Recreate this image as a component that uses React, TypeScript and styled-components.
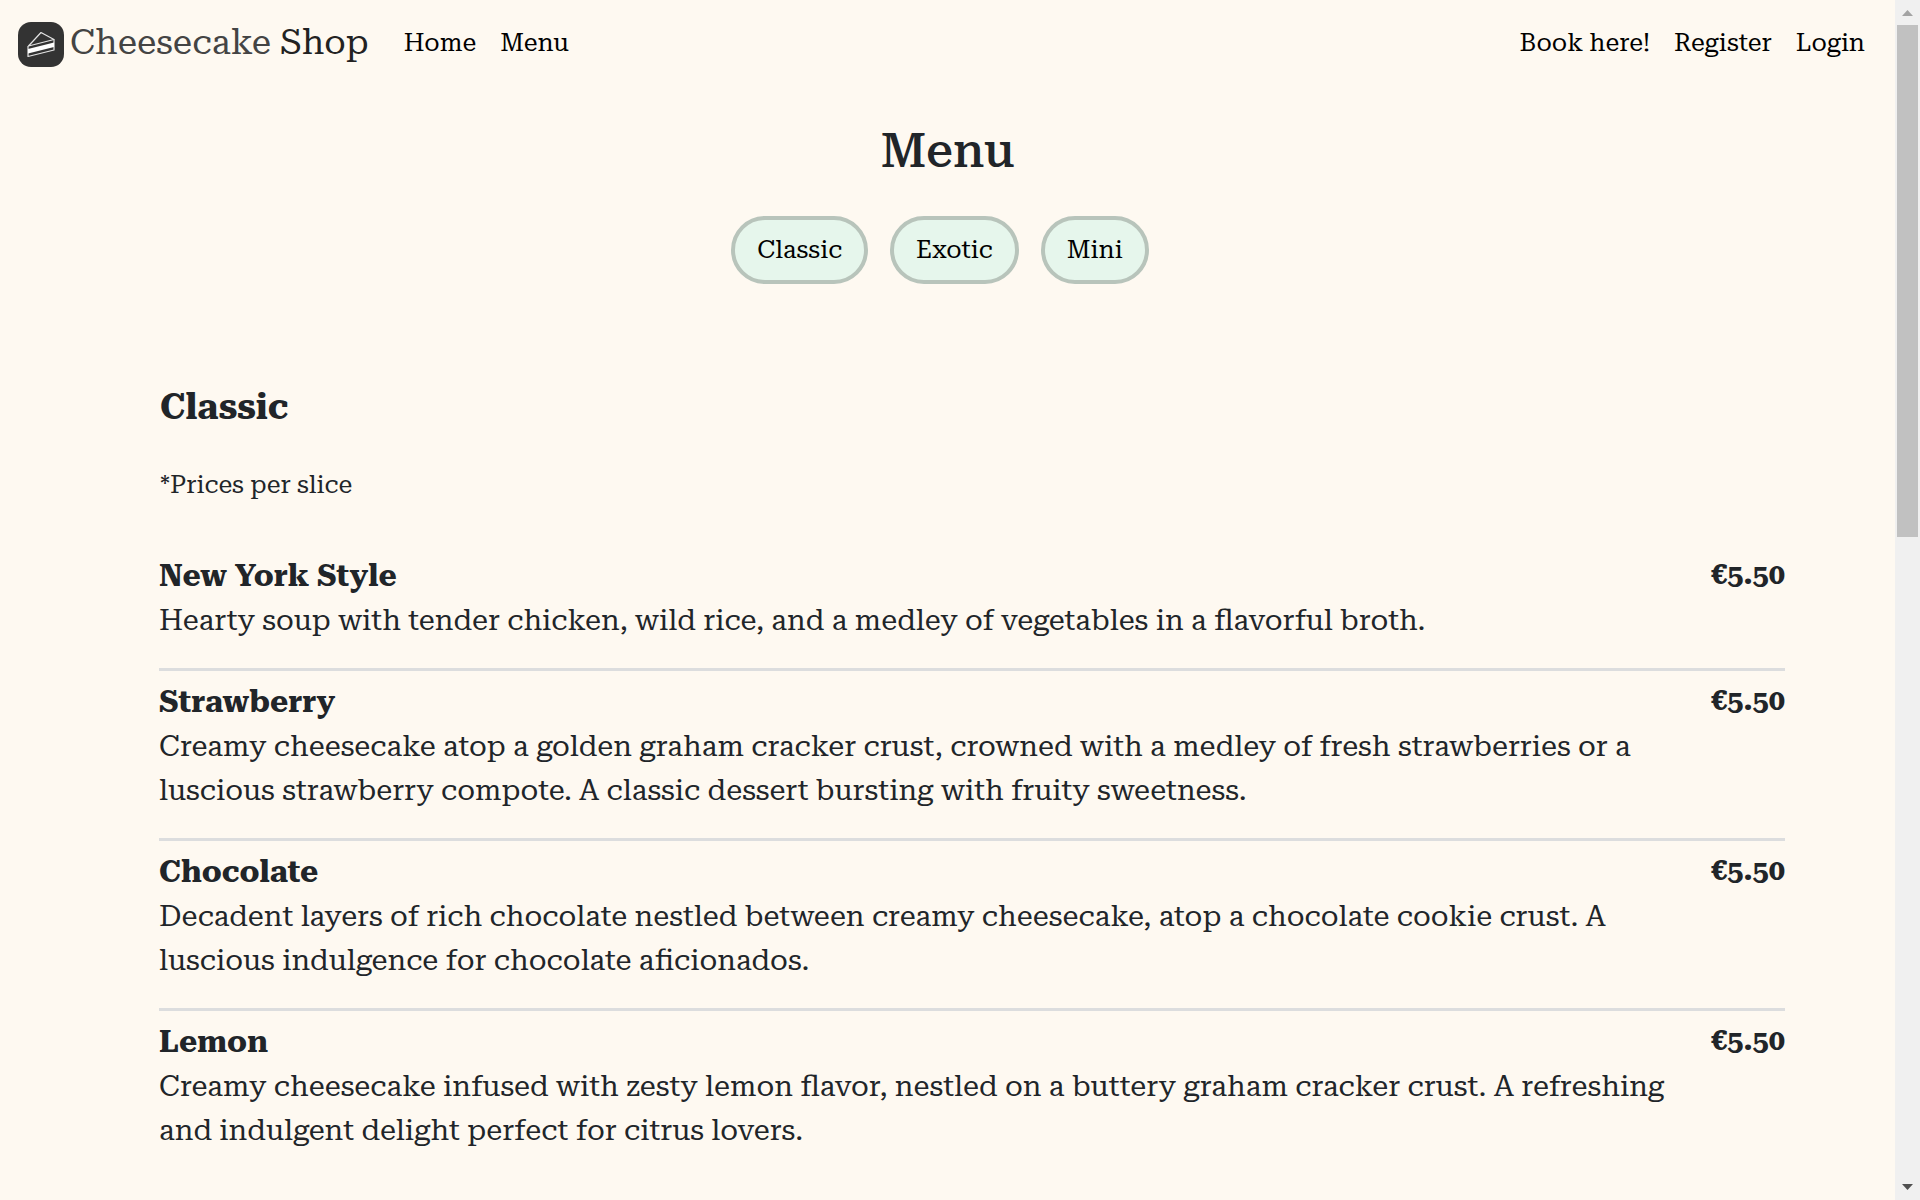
import React from "react";
import styled, { createGlobalStyle } from "styled-components";

const serif = '"Roboto Serif", "DejaVu Serif Condensed", "DejaVu Serif", serif';

const GlobalStyle = createGlobalStyle`
  *, *::before, *::after { box-sizing: border-box; }
  body {
    margin: 0;
    background: #fef9f1;
    color: #212529;
    font-family: ${serif};
    font-size: 25px;
    font-weight: 400;
    line-height: 36px;
  }
  h1, h2, h3, p, ul { margin: 0; padding: 0; }
`;

const Shell = styled.div`
  display: grid;
  grid-template-columns: minmax(0, 1fr) 25px;
  height: 100vh;
  overflow: hidden;
`;

const Page = styled.div`
  min-width: 0;
  overflow: hidden;
`;

const NavBar = styled.header`
  display: flex;
  align-items: center;
  height: 88px;
  padding: 0 30px 0 18px;
`;

const Brand = styled.a`
  display: flex;
  align-items: center;
  gap: 6px;
  margin-right: 35px;
  color: #444;
  font-size: 35px;
  line-height: 44px;
  text-decoration: none;
  white-space: nowrap;
`;

const BrandIcon = styled.svg`
  width: 46px;
  height: 46px;
`;

const BrandName = styled.span`
  padding-bottom: 2px;
`;

const BrandStrong = styled.span`
  color: #222;
`;

const NavLinks = styled.nav<{ $end?: boolean }>`
  display: flex;
  gap: 24px;
  margin-left: ${(p) => (p.$end ? "auto" : "0")};
  padding-bottom: 2px;
`;

const NavLink = styled.a`
  color: #000;
  text-decoration: none;
  white-space: nowrap;
`;

const Title = styled.h1`
  padding-top: 33px;
  font-size: 48px;
  font-weight: 500;
  line-height: 60px;
  text-align: center;
`;

const Categories = styled.div`
  display: flex;
  justify-content: center;
  gap: 22px;
  padding: 35px 15px 0 0;
`;

const CategoryButton = styled.button`
  height: 68px;
  padding: 0 22px;
  border: 4px solid #b8c4bb;
  border-radius: 34px;
  background: #e6f6ec;
  color: #000;
  font: inherit;
  cursor: pointer;
`;

const Section = styled.main`
  margin: 0 110px 0 159px;
  padding-top: 101px;
`;

const SectionTitle = styled.h2`
  padding-left: 1px;
  font-size: 36px;
  font-weight: 700;
  line-height: 44px;
`;

const Note = styled.p`
  padding: 38px 0 42px 1px;
`;

const Items = styled.ul`
  list-style: none;
`;

const Item = styled.li`
  padding: 8px 0 26px;
  border-bottom: 3px solid #dcddde;

  &:last-child {
    border-bottom: 0;
  }
`;

const ItemHead = styled.div`
  display: flex;
  justify-content: space-between;
  align-items: flex-start;
`;

const ItemName = styled.h3`
  font-size: 31px;
  font-weight: 700;
  line-height: 45px;
`;

const Price = styled.span`
  font-size: 29px;
  font-weight: 700;
  line-height: 42px;
`;

const Description = styled.p`
  max-width: 94%;
  font-size: 29px;
  line-height: 44px;
`;

const ScrollBar = styled.div`
  display: flex;
  flex-direction: column;
  align-items: center;
  background: #f0f0f0;
`;

const ScrollThumb = styled.div`
  width: 21px;
  height: 42.7%;
  margin-bottom: auto;
  background: #c1c1c1;
`;

const ScrollArrow = styled.svg`
  width: 25px;
  height: 25px;
`;

const cheesecakes = [
  {
    name: "New York Style",
    price: "€5.50",
    text: "Hearty soup with tender chicken, wild rice, and a medley of vegetables in a flavorful broth.",
  },
  {
    name: "Strawberry",
    price: "€5.50",
    text: "Creamy cheesecake atop a golden graham cracker crust, crowned with a medley of fresh strawberries or a luscious strawberry compote. A classic dessert bursting with fruity sweetness.",
  },
  {
    name: "Chocolate",
    price: "€5.50",
    text: "Decadent layers of rich chocolate nestled between creamy cheesecake, atop a chocolate cookie crust. A luscious indulgence for chocolate aficionados.",
  },
  {
    name: "Lemon",
    price: "€5.50",
    text: "Creamy cheesecake infused with zesty lemon flavor, nestled on a buttery graham cracker crust. A refreshing and indulgent delight perfect for citrus lovers.",
  },
];

export default function App() {
  return (
    <>
      <GlobalStyle />
      <Shell>
        <Page>
          <NavBar>
            <Brand href="#">
              <BrandIcon viewBox="0 0 46 46" aria-hidden="true">
                <rect y="1" width="46" height="45" rx="13" fill="#333" />
                <path d="M10.5 25 L23 11.500 L36 18.500 Z" fill="none" stroke="#e4e4e4" strokeWidth="1.200" strokeLinejoin="round" />
                <path d="M10 25 V35.500 L36 29 V18.500" fill="none" stroke="#e4e4e4" strokeWidth="1.200" strokeLinejoin="round" />
                <path d="M10 28 L36 21.500 V26 L10 32.500 Z" fill="#fff" />
              </BrandIcon>
              <BrandName>
                Cheesecake <BrandStrong>Shop</BrandStrong>
              </BrandName>
            </Brand>
            <NavLinks aria-label="Main">
              <NavLink href="#">Home</NavLink>
              <NavLink href="#">Menu</NavLink>
            </NavLinks>
            <NavLinks $end aria-label="Account">
              <NavLink href="#">Book here!</NavLink>
              <NavLink href="#">Register</NavLink>
              <NavLink href="#">Login</NavLink>
            </NavLinks>
          </NavBar>
          <Title>Menu</Title>
          <Categories>
            {["Classic", "Exotic", "Mini"].map((label) => (
              <CategoryButton key={label} type="button">
                {label}
              </CategoryButton>
            ))}
          </Categories>
          <Section>
            <SectionTitle>Classic</SectionTitle>
            <Note>*Prices per slice</Note>
            <Items>
              {cheesecakes.map((cake) => (
                <Item key={cake.name}>
                  <ItemHead>
                    <ItemName>{cake.name}</ItemName>
                    <Price>{cake.price}</Price>
                  </ItemHead>
                  <Description>{cake.text}</Description>
                </Item>
              ))}
            </Items>
          </Section>
        </Page>
        <ScrollBar aria-hidden="true">
          <ScrollArrow viewBox="0 0 25 25">
            <path d="M7 16 L12.500 10 L18 16 Z" fill="#a3a3a3" />
          </ScrollArrow>
          <ScrollThumb />
          <ScrollArrow viewBox="0 0 25 25">
            <path d="M7 9 L12.500 15 L18 9 Z" fill="#505050" />
          </ScrollArrow>
        </ScrollBar>
      </Shell>
    </>
  );
}
